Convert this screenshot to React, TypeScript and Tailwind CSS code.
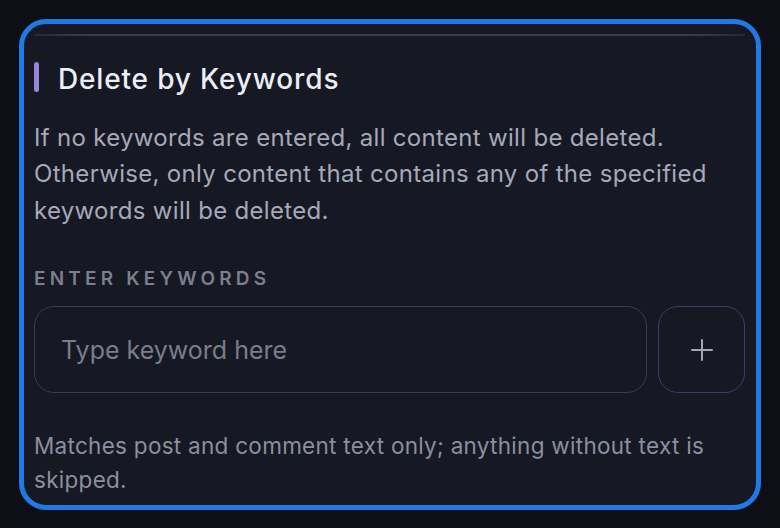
export default function App() {
  return (
    <main className="min-h-[528px] bg-[#0e0f16] pt-[19px] pl-[19px] pr-[19px] font-['Inter','Noto_Sans',sans-serif]">
      <section className="h-[491px] overflow-hidden rounded-[27px] border-[5px] border-[#1f7ae6] bg-[#161823] pl-[10px] pr-[11px]">
        <div className="mt-[10px] h-[1.5px] bg-[linear-gradient(90deg,rgba(58,61,75,0.45)_0%,#3a3d4b_7%,#3a3d4b_92%,rgba(58,61,75,0.45)_100%)]" />

        <div className="mt-[25.5px] flex items-start gap-[19px]">
          <span className="mt-[1px] h-[30px] w-[5px] shrink-0 rounded-full bg-[#9a85dc]" />
          <h2 className="text-[28px] font-medium leading-[36px] tracking-[0.03em] text-[#eceef6]">
            Delete by Keywords
          </h2>
        </div>

        <p className="mt-[22.5px] text-[24px] leading-[36.5px] tracking-[0.013em] text-[#a6a9b9]">
          If no keywords are entered, all content will be deleted. Otherwise,
          only content that contains any of the specified keywords will be
          deleted.
        </p>

        <div className="mt-[38px] text-[19px] font-semibold uppercase leading-[24px] tracking-[0.22em] text-[#7c7f8f]">
          Enter keywords
        </div>

        <div className="mt-[15px] flex gap-[11px]">
          <input
            type="text"
            placeholder="Type keyword here"
            className="h-[87px] min-w-0 flex-1 rounded-[20px] border-[1.5px] border-[#3b3d4b] bg-transparent px-[26px] text-[25px] text-[#e5e7ef] outline-none placeholder:text-[#7a7d8c]"
          />
          <button className="flex h-[87px] w-[87px] shrink-0 items-center justify-center rounded-[20px] border-[1.5px] border-[#3e3c6c] text-[#a4a7bb]">
            <svg width="22" height="22" viewBox="0 0 22 22" fill="none" stroke="currentColor" strokeWidth="2" strokeLinecap="round">
              <path d="M11 1v20M1 11h20" />
            </svg>
          </button>
        </div>

        <p className="mt-[36px] text-[22.5px] leading-[34px] tracking-[0.0125em] text-[#8c8f9e]">
          Matches post and comment text only; anything without text is skipped.
        </p>
      </section>
    </main>
  );
}
